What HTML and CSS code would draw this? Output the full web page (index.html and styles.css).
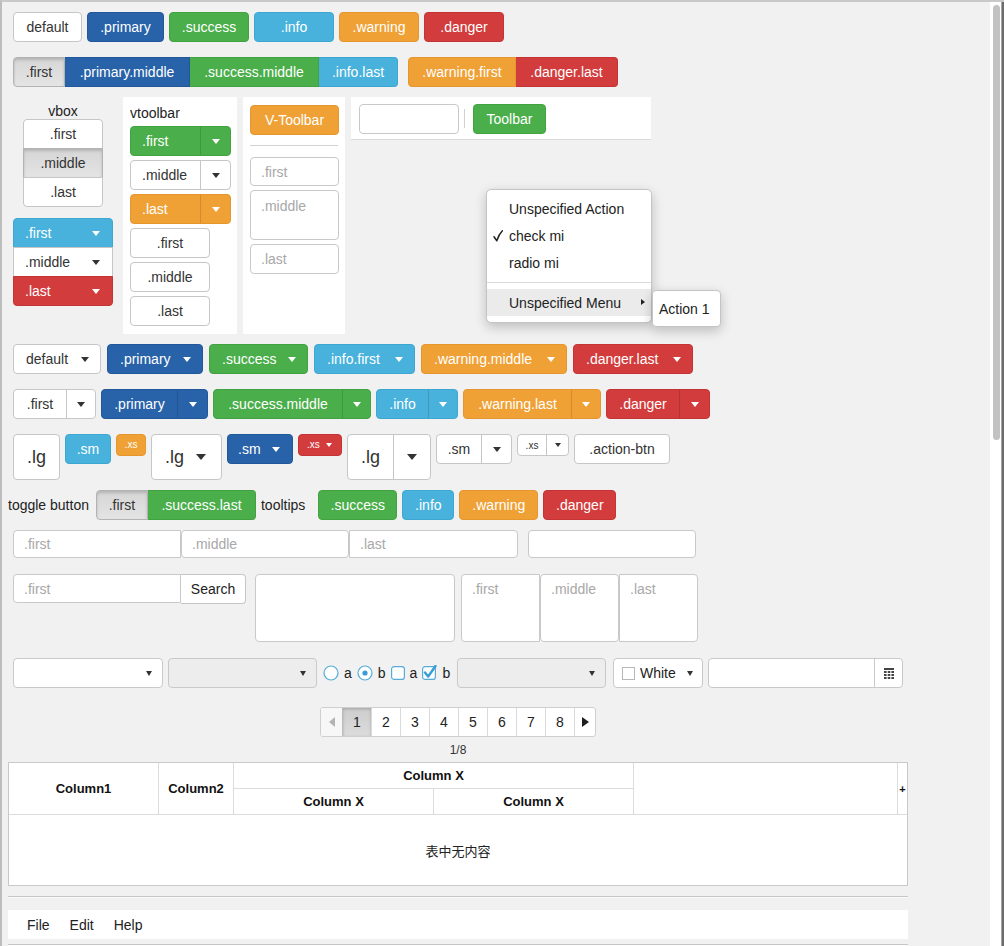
FILE: index.html
```html
<!DOCTYPE html>
<html lang="en">
<head>
<meta charset="utf-8">
<title>Controls</title>
<link rel="stylesheet" href="styles.css">
</head>
<body>
<div class="window">
  <main class="content">
    <div class="row r1">
      <button class="btn w69">default</button>
      <button class="btn primary w77">.primary</button>
      <button class="btn success w80">.success</button>
      <button class="btn info w80">.info</button>
      <button class="btn warning w80">.warning</button>
      <button class="btn danger w80">.danger</button>
    </div>

    <div class="row r2">
      <div class="hgroup">
        <button class="btn pressed w52">.first</button>
        <button class="btn primary w125">.primary.middle</button>
        <button class="btn success w129">.success.middle</button>
        <button class="btn info w79">.info.last</button>
      </div>
      <div class="hgroup">
        <button class="btn warning w108">.warning.first</button>
        <button class="btn danger w102">.danger.last</button>
      </div>
    </div>

    <div class="sec3">
      <div class="vbox-col">
        <div class="vbox-label">vbox</div>
        <div class="vgroup vbox">
          <button class="btn">.first</button>
          <button class="btn pressed">.middle</button>
          <button class="btn">.last</button>
        </div>
        <div class="vgroup vsplit">
          <button class="btn menu info"><span>.first</span><i class="caret"></i></button>
          <button class="btn menu"><span>.middle</span><i class="caret"></i></button>
          <button class="btn menu danger"><span>.last</span><i class="caret"></i></button>
        </div>
      </div>

      <div class="panel vtoolbar">
        <div class="panel-label">vtoolbar</div>
        <div class="vstack">
          <div class="split success w101"><span class="sp-main left w69">.first</span><span class="sp-arrow"><i class="caret"></i></span></div>
          <div class="split w101"><span class="sp-main left w69">.middle</span><span class="sp-arrow"><i class="caret"></i></span></div>
          <div class="split warning w101"><span class="sp-main left w69">.last</span><span class="sp-arrow"><i class="caret"></i></span></div>
          <button class="btn w80">.first</button>
          <button class="btn w80">.middle</button>
          <button class="btn w80">.last</button>
        </div>
      </div>

      <div class="panel vtoolbar2">
        <button class="btn warning w89">V-Toolbar</button>
        <div class="hsep"></div>
        <div class="vstack">
          <input class="field w89 h29" placeholder=".first">
          <textarea class="field area w89 h50" placeholder=".middle"></textarea>
          <input class="field w89" placeholder=".last">
        </div>
      </div>

      <div class="panel toolbar">
        <input class="field w100">
        <span class="vsep"></span>
        <button class="btn success w73">Toolbar</button>
      </div>
    </div>

    <div class="row r4">
      <button class="btn menu w88"><span>default</span><i class="caret"></i></button>
      <button class="btn menu primary w96"><span>.primary</span><i class="caret"></i></button>
      <button class="btn menu success w99"><span>.success</span><i class="caret"></i></button>
      <button class="btn menu info w101"><span>.info.first</span><i class="caret"></i></button>
      <button class="btn menu warning w146"><span>.warning.middle</span><i class="caret"></i></button>
      <button class="btn menu danger w120"><span>.danger.last</span><i class="caret"></i></button>
    </div>

    <div class="row r5">
      <div class="split w83"><span class="sp-main w52">.first</span><span class="sp-arrow"><i class="caret"></i></span></div>
      <div class="split primary w107"><span class="sp-main w75">.primary</span><span class="sp-arrow"><i class="caret"></i></span></div>
      <div class="split success w158"><span class="sp-main w128">.success.middle</span><span class="sp-arrow"><i class="caret"></i></span></div>
      <div class="split info w82"><span class="sp-main w51">.info</span><span class="sp-arrow"><i class="caret"></i></span></div>
      <div class="split warning w138"><span class="sp-main w107">.warning.last</span><span class="sp-arrow"><i class="caret"></i></span></div>
      <div class="split danger w104"><span class="sp-main w72">.danger</span><span class="sp-arrow"><i class="caret"></i></span></div>
    </div>

    <div class="row r6">
      <button class="btn lg w47">.lg</button>
      <button class="btn info w46">.sm</button>
      <button class="btn warning xs w30">.xs</button>
      <button class="btn lg menu lgmenu w71"><span>.lg</span><i class="caret big"></i></button>
      <button class="btn primary menu smmenu w66"><span>.sm</span><i class="caret"></i></button>
      <button class="btn danger xs menu xsmenu w44"><span>.xs</span><i class="caret small"></i></button>
      <div class="split lg w84"><span class="sp-main w45">.lg</span><span class="sp-arrow"><i class="caret big"></i></span></div>
      <div class="split w76"><span class="sp-main w44">.sm</span><span class="sp-arrow"><i class="caret"></i></span></div>
      <div class="split xs w52"><span class="sp-main w28">.xs</span><span class="sp-arrow"><i class="caret small"></i></span></div>
      <button class="btn w96">.action-btn</button>
    </div>

    <div class="row r7">
      <span class="lbl lbl-toggle">toggle button</span>
      <div class="hgroup">
        <button class="btn pressed w52">.first</button>
        <button class="btn success w108">.success.last</button>
      </div>
      <span class="lbl">tooltips</span>
      <button class="btn success w79 tip-first">.success</button>
      <button class="btn info w52">.info</button>
      <button class="btn warning w79">.warning</button>
      <button class="btn danger w73">.danger</button>
    </div>

    <div class="row r8">
      <div class="igroup">
        <input class="field w168" placeholder=".first">
        <input class="field w168" placeholder=".middle">
        <input class="field w169" placeholder=".last">
      </div>
      <input class="field w168">
    </div>

    <div class="row r9">
      <div class="igroup">
        <input class="field w168 h29" placeholder=".first">
        <button class="btn search w65">Search</button>
      </div>
      <textarea class="field area w200 h68 ta-single"></textarea>
      <div class="igroup tgroup">
        <textarea class="field area w79 h68" placeholder=".first"></textarea>
        <textarea class="field area w79 h68" placeholder=".middle"></textarea>
        <textarea class="field area w79 h68" placeholder=".last"></textarea>
      </div>
    </div>

    <div class="row r10">
      <div class="select w150"><i class="caret sel"></i></div>
      <div class="select dim w149"><i class="caret sel"></i></div>
      <div class="choices">
        <label class="choice"><svg class="ctl" width="16" height="16" viewBox="0 0 16 16"><circle cx="8" cy="8" r="7" fill="#fff" stroke="#55acd9" stroke-width="1.2"/></svg>a</label>
        <label class="choice"><svg class="ctl" width="16" height="16" viewBox="0 0 16 16"><circle cx="8" cy="8" r="7" fill="#fff" stroke="#55acd9" stroke-width="1.2"/><circle cx="8" cy="8" r="2.6" fill="#3b9dd5"/></svg>b</label>
        <label class="choice"><svg class="ctl" width="14" height="16" viewBox="0 0 14 16"><rect x="0.6" y="1.6" width="12.8" height="12.8" rx="2.5" fill="#fff" stroke="#55acd9" stroke-width="1.2"/></svg>a</label>
        <label class="choice"><svg class="ctl" width="15" height="16" viewBox="0 0 15 16"><rect x="0.6" y="1.6" width="12.8" height="12.8" rx="2.5" fill="#fff" stroke="#55acd9" stroke-width="1.2"/><path d="M3 7.5 L6.2 11.5 L13.5 1" fill="none" stroke="#3b9dd5" stroke-width="2.4" stroke-linecap="round" stroke-linejoin="round"/></svg>b</label>
      </div>
      <div class="select dim w149"><i class="caret sel"></i></div>
      <div class="cpick"><span class="swatch"></span><span class="cp-text">White</span><i class="caret sel"></i></div>
      <div class="date">
        <input class="date-in">
        <span class="date-btn">
          <svg width="10" height="11" viewBox="0 0 10 11">
            <rect x="0" y="0" width="10" height="2" fill="#444"/>
            <rect x="0" y="3" width="2.6" height="2" fill="#444"/><rect x="3.7" y="3" width="2.6" height="2" fill="#444"/><rect x="7.4" y="3" width="2.6" height="2" fill="#444"/>
            <rect x="0" y="6" width="2.6" height="2" fill="#444"/><rect x="3.7" y="6" width="2.6" height="2" fill="#444"/><rect x="7.4" y="6" width="2.6" height="2" fill="#444"/>
            <rect x="0" y="9" width="2.6" height="2" fill="#444"/><rect x="3.7" y="9" width="2.6" height="2" fill="#444"/><rect x="7.4" y="9" width="2.6" height="2" fill="#444"/>
          </svg>
        </span>
      </div>
    </div>

    <div class="pager-wrap">
      <div class="pager">
        <span class="pg nav"><i class="tri-left"></i></span>
        <span class="pg cur">1</span>
        <span class="pg">2</span>
        <span class="pg">3</span>
        <span class="pg">4</span>
        <span class="pg">5</span>
        <span class="pg">6</span>
        <span class="pg">7</span>
        <span class="pg">8</span>
        <span class="pg nav"><i class="tri-right"></i></span>
      </div>
    </div>
    <div class="pageinfo">1/8</div>

    <div class="grid-table">
      <div class="th c1">Column1</div>
      <div class="th c2">Column2</div>
      <div class="th cx">Column X</div>
      <div class="th c5"></div>
      <div class="th c6">+</div>
      <div class="th cx1">Column X</div>
      <div class="th cx2">Column X</div>
      <div class="tbody">表中无内容</div>
    </div>

    <div class="sep sep1"></div>
    <nav class="menubar"><span>File</span><span>Edit</span><span>Help</span></nav>
    <div class="sep sep2"></div>
  </main>

  <div class="scroll"><div class="thumb"></div></div>
  <div class="edge"></div>

  <div class="ctx">
    <div class="mi">Unspecified Action</div>
    <div class="mi"><svg class="check" width="10" height="12" viewBox="0 0 10 12"><path d="M1 6.8 L3.8 10.8 C5 7 6.6 3.6 9.4 0.8" fill="none" stroke="#222" stroke-width="1.5" stroke-linecap="round" stroke-linejoin="round"/></svg>check mi</div>
    <div class="mi">radio mi</div>
    <div class="msep"></div>
    <div class="mi hl">Unspecified Menu<i class="sub-arrow"></i></div>
    <div class="submenu"><div class="mi">Action 1</div></div>
  </div>
</div>
</body>
</html>
```

FILE: styles.css
```css
* { box-sizing: border-box; }
html, body { margin: 0; padding: 0; }
body {
  width: 1004px;
  height: 946px;
  overflow: hidden;
  background: #f1f1f1;
  font-family: "Liberation Sans", Arial, Helvetica, sans-serif;
  font-size: 14px;
  color: #333;
}

.window {
  position: relative;
  display: flex;
  width: 1004px;
  height: 946px;
  border-top: 2px solid #c9c9c9;
  border-left: 2px solid #bdbdbd;
  overflow: hidden;
}
.content { width: 988px; flex: none; padding-left: 6px; }
.scroll { width: 11px; flex: none; background: #fff; padding: 3px 0 0 3px; }
.thumb { width: 7px; height: 435px; border-radius: 4px; background: #c2c2c2; }
.edge { width: 3px; flex: none; background: #6c6c6c; border-left: 1px solid #a5a5a5; }

/* rows */
.row { display: flex; align-items: flex-start; gap: 5px; padding-left: 5px; }
.r1 { margin-top: 10px; }
.r2 { margin-top: 15px; gap: 10px; }
.sec3 { margin-top: 10px; display: flex; align-items: flex-start; padding-left: 5px; }
.r4 { margin-top: 10px; gap: 6px; }
.r5 { margin-top: 15px; }
.r6 { margin-top: 15px; }
.r7 { margin-top: 10px; padding-left: 0; align-items: center; height: 30px; }
.r8 { margin-top: 10px; gap: 10px; }
.r9 { margin-top: 16px; }
.r10 { margin-top: 16px; }

/* widths */
.w28 { width: 28px; } .w30 { width: 30px; } .w44 { width: 44px; } .w45 { width: 45px; }
.w46 { width: 46px; } .w47 { width: 47px; } .w51 { width: 51px; } .w52 { width: 52px; }
.w65 { width: 65px; } .w66 { width: 66px; } .w69 { width: 69px; } .w71 { width: 71px; }
.w72 { width: 72px; } .w73 { width: 73px; } .w75 { width: 75px; } .w76 { width: 76px; }
.w77 { width: 77px; } .w79 { width: 79px; } .w80 { width: 80px; } .w82 { width: 82px; }
.w83 { width: 83px; } .w84 { width: 84px; } .w88 { width: 88px; } .w89 { width: 89px; }
.w96 { width: 96px; } .w99 { width: 99px; } .w100 { width: 100px; } .w101 { width: 101px; }
.w102 { width: 102px; } .w104 { width: 104px; } .w107 { width: 107px; } .w108 { width: 108px; }
.w120 { width: 120px; } .w125 { width: 125px; } .w128 { width: 128px; } .w129 { width: 129px; }
.w138 { width: 138px; } .w146 { width: 146px; } .w149 { width: 149px; } .w150 { width: 150px; }
.w158 { width: 158px; } .w168 { width: 168px; } .w169 { width: 169px; } .w200 { width: 200px; }
.h29 { height: 29px !important; } .h50 { height: 50px !important; } .h68 { height: 68px !important; }

/* buttons */
.btn {
  display: inline-flex;
  align-items: center;
  justify-content: center;
  flex: none;
  height: 30px;
  margin: 0;
  padding: 0;
  border: 1px solid #c6c6c6;
  border-radius: 4px;
  background: #fff;
  color: #333;
  font: inherit;
  line-height: 1;
  white-space: nowrap;
}

/* split buttons */
.split {
  display: flex;
  flex: none;
  height: 30px;
  border: 1px solid #c6c6c6;
  border-radius: 4px;
  background: #fff;
  color: #333;
  overflow: hidden;
  white-space: nowrap;
}
.split.lg { height: 46px; font-size: 18px; }
.split.xs { height: 22px; font-size: 10px; }
.sp-main { display: flex; align-items: center; justify-content: center; flex: none; }
.sp-main.left { justify-content: flex-start; padding-left: 11px; }
.sp-arrow {
  display: flex;
  align-items: center;
  justify-content: center;
  flex: 1;
  border-left: 1px solid #c6c6c6;
}

/* colour variants (after base rules so they win) */
.primary { background: #2862a8; border-color: #22579a; color: #fff; }
.success { background: #4aae4a; border-color: #42a242; color: #fff; }
.info    { background: #48b2dc; border-color: #3ea7d1; color: #fff; }
.warning { background: #efa136; border-color: #e5962c; color: #fff; }
.danger  { background: #d23c3c; border-color: #c43434; color: #fff; }
.pressed {
  background: linear-gradient(#d6d6d6, #e4e4e4);
  border-color: #b3b3b3;
  box-shadow: inset 0 2px 3px rgba(0, 0, 0, 0.16);
}
.split.primary .sp-arrow, .split.success .sp-arrow, .split.info .sp-arrow,
.split.warning .sp-arrow, .split.danger .sp-arrow { border-left-color: rgba(0, 0, 0, 0.13); }

.btn.menu { justify-content: space-between; padding: 0 11px 0 12px; }
.btn.lg { height: 46px; font-size: 18px; }
.btn.xs { height: 22px; font-size: 10px; }
.btn.lgmenu { padding: 0 15px 0 13px; }
.btn.smmenu { padding: 0 12px 0 10px; }
.btn.xsmenu { padding: 0 9px 0 8px; }
.btn.search { color: #222; }

.caret {
  display: block;
  flex: none;
  width: 0;
  height: 0;
  border-left: 4px solid transparent;
  border-right: 4px solid transparent;
  border-top: 5px solid currentColor;
}
.caret.big { border-left-width: 5px; border-right-width: 5px; border-top-width: 6px; }
.caret.small { border-left-width: 3px; border-right-width: 3px; border-top-width: 4px; }
.caret.sel { border-left-width: 3.5px; border-right-width: 3.5px; border-top-width: 5px; color: #333; }

/* groups */
.hgroup, .igroup { display: flex; flex: none; }
.hgroup > *, .igroup > * { border-radius: 0; }
.hgroup > * + *, .igroup > * + * { border-left: none; }
.hgroup > :first-child, .igroup > :first-child { border-radius: 4px 0 0 4px; }
.hgroup > :last-child, .igroup > :last-child { border-radius: 0 4px 4px 0; }
.vgroup { display: flex; flex-direction: column; flex: none; }
.vgroup > * { border-radius: 0; }
.vgroup > * + * { margin-top: -1px; }
.vgroup > :first-child { border-radius: 4px 4px 0 0; }
.vgroup > :last-child { border-radius: 0 0 4px 4px; }

/* section 3 */
.vbox-col { width: 100px; flex: none; display: flex; flex-direction: column; }
.vbox-label { margin-top: 6px; height: 16px; line-height: 16px; text-align: center; color: #222; }
.vbox { margin-left: 10px; width: 80px; }
.vbox .btn { width: 80px; height: 30px; }
.vsplit { margin-top: 11px; width: 100px; }
.vsplit .btn { width: 100px; height: 30px; padding: 0 12px 0 11px; }

.panel { background: #fff; flex: none; }
.vtoolbar { width: 114px; height: 237px; margin-left: 10px; padding: 8px 7px; }
.panel-label { height: 16px; line-height: 16px; margin-bottom: 5px; color: #222; }
.vstack { display: flex; flex-direction: column; align-items: flex-start; gap: 4px; }
.vtoolbar2 { width: 102px; height: 237px; margin-left: 6px; padding: 8px 7px; }
.hsep { height: 1px; background: #d3d3d3; margin: 10px 0 11px; }
.toolbar {
  width: 300px;
  height: 43px;
  margin-left: 6px;
  padding: 7px 8px 0;
  border-bottom: 1px solid #d9d9d9;
  display: flex;
  align-items: flex-start;
}
.vsep { width: 1px; height: 19px; background: #d0d0d0; margin: 5px 8px 0 5px; flex: none; }

/* fields */
.field {
  display: block;
  flex: none;
  margin: 0;
  height: 30px;
  padding: 0 10px;
  border: 1px solid #c9c9c9;
  border-radius: 4px;
  background: #fff;
  font: inherit;
  color: #333;
  outline: none;
}
.r8 .field { height: 28px; }
.field::placeholder { color: #a8a8a8; opacity: 1; }
textarea.field { resize: none; padding: 6px 10px; line-height: 16px; overflow: hidden; }
.vtoolbar2 textarea.field { padding-top: 7px; }
.ta-single { margin-left: 4px; }
.tgroup { margin-left: 1px; }

/* labels */
.lbl { white-space: nowrap; color: #222; }
.lbl-toggle { margin-right: 2px; }
.tip-first { margin-left: 8px; }

/* row 10 */
.select {
  display: flex;
  flex: none;
  align-items: center;
  justify-content: flex-end;
  height: 30px;
  padding-right: 10px;
  border: 1px solid #c9c9c9;
  border-radius: 4px;
  background: #fff;
}
.select.dim { background: #ededed; }
.choices { display: flex; align-items: center; height: 30px; width: 129px; margin-left: 1px; flex: none; }
.choice { display: flex; align-items: center; gap: 5px; margin-right: 5px; color: #222; }
.ctl { display: block; flex: none; }
.cpick {
  display: flex;
  flex: none;
  align-items: center;
  width: 90px;
  height: 30px;
  margin-left: 2px;
  padding: 0 9px 0 8px;
  border: 1px solid #c9c9c9;
  border-radius: 4px;
  background: #fff;
  color: #222;
}
.swatch { width: 13px; height: 13px; border: 1px solid #b8b8b8; background: #fff; margin-right: 5px; flex: none; }
.cp-text { flex: 1; }
.date {
  display: flex;
  flex: none;
  width: 195px;
  height: 30px;
  border: 1px solid #c9c9c9;
  border-radius: 4px;
  background: #fff;
  overflow: hidden;
}
.date-in { flex: 1; min-width: 0; border: none; background: transparent; outline: none; font: inherit; margin: 0; padding: 0 8px; }
.date-btn { width: 28px; flex: none; border-left: 1px solid #c9c9c9; display: flex; align-items: center; justify-content: center; }

/* pager */
.pager-wrap { width: 900px; display: flex; justify-content: center; margin-top: 19px; }
.pager {
  display: flex;
  height: 30px;
  border: 1px solid #cfcfcf;
  border-radius: 3px;
  background: #fff;
  overflow: hidden;
}
.pg {
  width: 29px;
  display: flex;
  align-items: center;
  justify-content: center;
  border-left: 1px solid #dadada;
  color: #222;
  font-size: 14px;
}
.pg:first-child { border-left: none; }
.pg.nav { width: 21px; }
.pg:first-child.nav { background: #f7f7f7; }
.pg.cur {
  background: linear-gradient(#cdcdcd, #dcdcdc);
  box-shadow: inset 0 1px 3px rgba(0, 0, 0, 0.22);
  border-left-color: #bdbdbd;
}
.tri-left { width: 0; height: 0; border-top: 5px solid transparent; border-bottom: 5px solid transparent; border-right: 6px solid #b3b3b3; }
.tri-right { width: 0; height: 0; border-top: 5px solid transparent; border-bottom: 5px solid transparent; border-left: 7px solid #1e1e1e; }
.pageinfo { width: 900px; text-align: center; margin-top: 6px; height: 14px; line-height: 14px; font-size: 12px; color: #333; }

/* table */
.grid-table {
  margin-top: 5px;
  width: 900px;
  height: 124px;
  border: 1px solid #c9c9c9;
  background: #fff;
  display: grid;
  grid-template-columns: 150px 75px 200px 200px 264px 9px;
  grid-template-rows: 26px 26px 70px;
}
.th {
  display: flex;
  align-items: center;
  justify-content: center;
  border-right: 1px solid #dcdcdc;
  border-bottom: 1px solid #dcdcdc;
  font-weight: bold;
  font-size: 13px;
  color: #111;
}
.c1 { grid-column: 1; grid-row: 1 / 3; }
.c2 { grid-column: 2; grid-row: 1 / 3; }
.cx { grid-column: 3 / 5; grid-row: 1; }
.c5 { grid-column: 5; grid-row: 1 / 3; }
.c6 { grid-column: 6; grid-row: 1 / 3; border-right: none; font-size: 11px; }
.cx1 { grid-column: 3; grid-row: 2; }
.cx2 { grid-column: 4; grid-row: 2; }
.tbody {
  grid-column: 1 / 7;
  grid-row: 3;
  display: flex;
  align-items: center;
  justify-content: center;
  font-family: "Noto Sans CJK SC", "Liberation Sans", sans-serif;
  font-size: 13px;
  color: #222;
}

/* menubar */
.sep { width: 900px; height: 2px; border-top: 1px solid #c6c6c6; border-bottom: 1px solid #fbfbfb; }
.sep1 { margin-top: 10px; }
.sep2 { margin-top: 5px; }
.menubar {
  margin-top: 12px;
  width: 900px;
  height: 29px;
  background: #fff;
  display: flex;
  align-items: center;
  padding-left: 9px;
  color: #222;
}
.menubar span { padding: 0 10px; }

/* context menu */
.ctx {
  position: absolute;
  left: 484px;
  top: 187px;
  width: 166px;
  padding: 5px 0 6px;
  background: #fff;
  border: 1px solid #c4c4c4;
  border-radius: 5px;
  box-shadow: 0 4px 12px rgba(0, 0, 0, 0.22);
  color: #222;
}
.mi { position: relative; height: 27px; display: flex; align-items: center; padding-left: 22px; white-space: nowrap; }
.mi.hl { background: #ebebeb; }
.check { position: absolute; left: 6px; top: 8px; }
.msep { height: 1px; margin: 6px 0; background: #dcdcdc; }
.sub-arrow {
  position: absolute;
  right: 6px;
  top: 10px;
  width: 0;
  height: 0;
  border-top: 3.5px solid transparent;
  border-bottom: 3.5px solid transparent;
  border-left: 4px solid #222;
}
.submenu {
  position: absolute;
  left: 165px;
  top: 100px;
  width: 69px;
  padding: 4px 0;
  background: #fff;
  border: 1px solid #c4c4c4;
  border-radius: 4px;
  box-shadow: 0 4px 12px rgba(0, 0, 0, 0.22);
}
.submenu .mi { padding-left: 6px; }
```
